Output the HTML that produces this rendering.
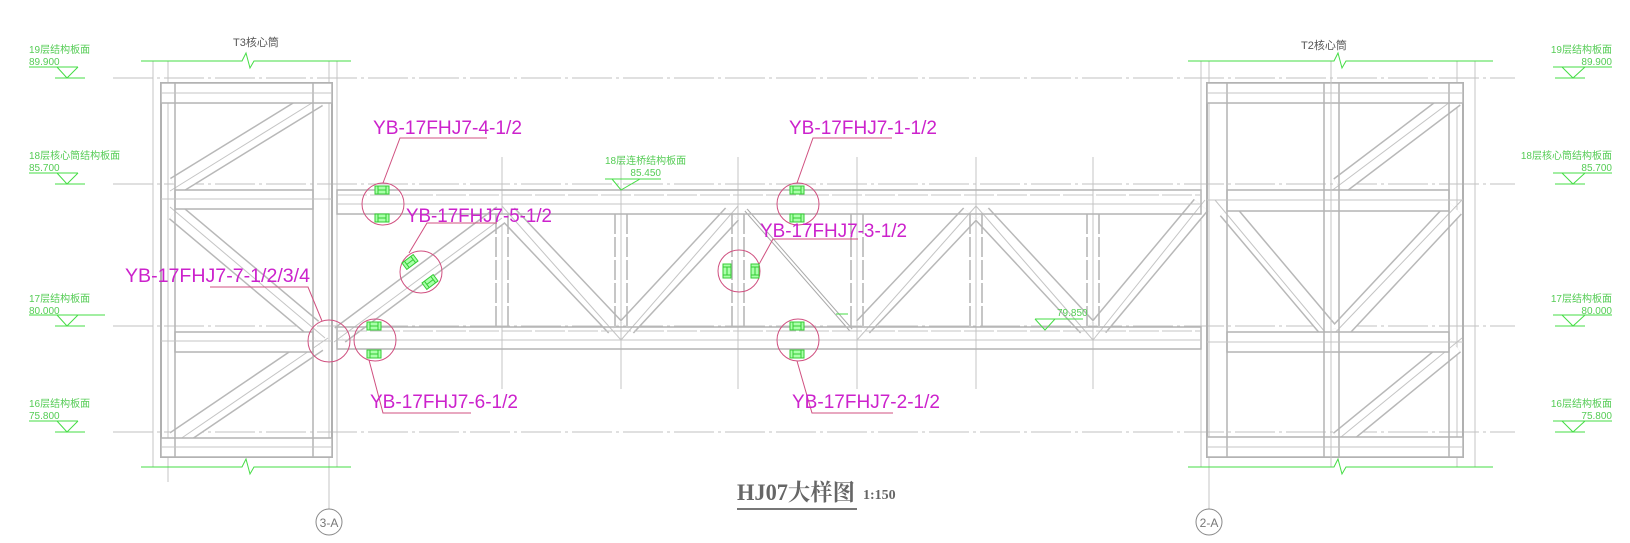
<!DOCTYPE html>
<html><head><meta charset="utf-8"><style>
html,body{margin:0;padding:0;background:#fff;width:1630px;height:543px;overflow:hidden}
svg{display:block}
.g{stroke:#b4b4b4;stroke-width:1.5;fill:none}
.gt{stroke:#c4c4c4;stroke-width:1;fill:none}
.lv{stroke:#c0c0c0;stroke-width:1;stroke-dasharray:40 4 3 4;fill:none}
.grn{stroke:#44dd44;stroke-width:1;fill:none}
.gtx{fill:#55cc55;font-family:"Liberation Sans","Noto Sans CJK SC",sans-serif;font-size:10px}
.mg{fill:#cc22cc;font-family:"Liberation Sans",sans-serif;font-size:19px}
.ml{stroke:#d05080;stroke-width:1;fill:none}
.wb{fill:#fff;stroke:#b4b4b4;stroke-width:1.5}
</style></head><body>
<svg width="1630" height="543" viewBox="0 0 1630 543" xmlns="http://www.w3.org/2000/svg">
<defs>
<g id="ib"><rect x="-7" y="-4" width="14" height="8" fill="#aaffaa" stroke="#33cc33" stroke-width="1"/><line x1="-4" y1="-4" x2="-4" y2="4" stroke="#33cc33"/><line x1="4" y1="-4" x2="4" y2="4" stroke="#33cc33"/><line x1="-4" y1="0" x2="4" y2="0" stroke="#33cc33"/></g>
</defs>

<!-- level lines -->
<line class="lv" x1="113" y1="78" x2="1515" y2="78"/>
<line class="lv" x1="113" y1="184" x2="1515" y2="184"/>
<line class="lv" x1="113" y1="326" x2="1515" y2="326"/>
<line class="lv" x1="113" y1="432" x2="1515" y2="432"/>

<!-- outer column lines -->
<line class="gt" x1="153" y1="61" x2="153" y2="467"/>
<line class="gt" x1="168" y1="61" x2="168" y2="482"/>
<line class="gt" x1="329" y1="61" x2="329" y2="509"/>
<line class="gt" x1="337" y1="61" x2="337" y2="467"/>
<line class="gt" x1="1201" y1="61" x2="1201" y2="467"/>
<line class="gt" x1="1209" y1="61" x2="1209" y2="509"/>
<line class="gt" x1="1457" y1="61" x2="1457" y2="467"/>
<line class="gt" x1="1475" y1="61" x2="1475" y2="467"/>

<!-- bridge vertical grid lines -->
<g class="gt">
<line x1="502" y1="157" x2="502" y2="389"/><line x1="621" y1="157" x2="621" y2="389"/>
<line x1="738" y1="157" x2="738" y2="389"/><line x1="857" y1="157" x2="857" y2="389"/>
<line x1="976" y1="157" x2="976" y2="389"/><line x1="1093" y1="157" x2="1093" y2="389"/>
</g>

<!-- diagonals: strip technique -->
<g stroke-linecap="butt">
<g stroke="#b8b8b8" stroke-width="19">
<line x1="175" y1="186" x2="318" y2="98"/>
<line x1="175" y1="212" x2="313" y2="328"/>
<line x1="175" y1="440" x2="318" y2="343"/>
<line x1="340" y1="335" x2="502" y2="214"/>
<line x1="508" y1="214" x2="615" y2="327"/>
<line x1="627" y1="327" x2="732" y2="214"/>
<line x1="863" y1="327" x2="970" y2="214"/>
<line x1="982" y1="214" x2="1087" y2="327"/>
<line x1="1099" y1="327" x2="1201" y2="205"/>
<line x1="1339" y1="186" x2="1455" y2="98"/>
<line x1="1227" y1="210" x2="1330" y2="332"/>
<line x1="1339" y1="332" x2="1455" y2="208"/>
<line x1="1339" y1="440" x2="1455" y2="345"/>
</g>
<g stroke="#fff" stroke-width="16">
<line x1="175" y1="186" x2="318" y2="98"/>
<line x1="175" y1="212" x2="313" y2="328"/>
<line x1="175" y1="440" x2="318" y2="343"/>
<line x1="340" y1="335" x2="502" y2="214"/>
<line x1="508" y1="214" x2="615" y2="327"/>
<line x1="627" y1="327" x2="732" y2="214"/>
<line x1="863" y1="327" x2="970" y2="214"/>
<line x1="982" y1="214" x2="1087" y2="327"/>
<line x1="1099" y1="327" x2="1201" y2="205"/>
<line x1="1339" y1="186" x2="1455" y2="98"/>
<line x1="1227" y1="210" x2="1330" y2="332"/>
<line x1="1339" y1="332" x2="1455" y2="208"/>
<line x1="1339" y1="440" x2="1455" y2="345"/>
</g>
<g class="gt">
<line x1="170" y1="191" x2="328" y2="93"/>
<line x1="170" y1="207" x2="325" y2="338"/>
<line x1="170" y1="446" x2="328" y2="338"/>
<line x1="334" y1="342" x2="502" y2="218"/>
<line x1="502" y1="206" x2="621" y2="340"/>
<line x1="621" y1="340" x2="738" y2="206"/>
<line x1="857" y1="340" x2="976" y2="206"/>
<line x1="976" y1="206" x2="1093" y2="340"/>
<line x1="1093" y1="340" x2="1205" y2="200"/>
<line x1="1330" y1="192" x2="1462" y2="93"/>
<line x1="1215" y1="200" x2="1330" y2="338"/>
<line x1="1330" y1="338" x2="1462" y2="200"/>
<line x1="1330" y1="446" x2="1462" y2="338"/>
</g>
<line x1="746" y1="210" x2="851" y2="330" stroke="#aaa" stroke-width="4"/>
<line x1="746" y1="210" x2="851" y2="330" stroke="#fff" stroke-width="2"/>
</g>

<!-- bridge chords -->
<rect x="337" y="190" width="864" height="24" fill="none" stroke="#b4b4b4" stroke-width="1.5"/>
<line class="gt" x1="337" y1="195" x2="1201" y2="195" stroke-dasharray="30 3"/>
<line class="gt" x1="337" y1="204" x2="1201" y2="204"/>
<rect x="337" y="327" width="864" height="22" fill="none" stroke="#b4b4b4" stroke-width="1.5"/>
<line class="gt" x1="337" y1="331" x2="1201" y2="331" stroke-dasharray="30 3"/>
<line class="gt" x1="337" y1="340" x2="1201" y2="340"/>
<!-- bridge posts -->
<g class="g" stroke-dasharray="20 3">
<line x1="496" y1="214" x2="496" y2="327"/><line x1="508" y1="214" x2="508" y2="327"/>
<line x1="615" y1="214" x2="615" y2="327"/><line x1="627" y1="214" x2="627" y2="327"/>
<line x1="732" y1="214" x2="732" y2="327"/><line x1="744" y1="214" x2="744" y2="327"/>
<line x1="851" y1="214" x2="851" y2="327"/><line x1="863" y1="214" x2="863" y2="327"/>
<line x1="970" y1="214" x2="970" y2="327"/><line x1="982" y1="214" x2="982" y2="327"/>
<line x1="1087" y1="214" x2="1087" y2="327"/><line x1="1099" y1="214" x2="1099" y2="327"/>
</g>

<!-- left tower frame -->
<rect x="161" y="83" width="171" height="374" fill="none" stroke="#b0b0b0" stroke-width="2"/>
<rect class="wb" x="161" y="83" width="171" height="20"/>
<rect class="wb" x="175" y="190" width="138" height="19"/>
<rect class="wb" x="175" y="332" width="138" height="20"/>
<rect class="wb" x="161" y="438" width="171" height="19"/>
<line class="g" x1="175" y1="83" x2="175" y2="457"/>
<line class="g" x1="313" y1="83" x2="313" y2="457"/>
<g class="gt"><line x1="161" y1="93" x2="332" y2="93"/><line x1="161" y1="199" x2="332" y2="199"/><line x1="161" y1="341" x2="332" y2="341"/><line x1="161" y1="447" x2="332" y2="447"/></g>

<!-- right tower frame -->
<rect x="1207" y="83" width="256" height="374" fill="none" stroke="#b0b0b0" stroke-width="2"/>
<rect class="wb" x="1207" y="83" width="256" height="20"/>
<rect class="wb" x="1227" y="190" width="222" height="21"/>
<rect class="wb" x="1227" y="332" width="222" height="20"/>
<rect class="wb" x="1207" y="437" width="256" height="20"/>
<g class="g"><line x1="1227" y1="83" x2="1227" y2="457"/><line x1="1324" y1="83" x2="1324" y2="457"/><line x1="1339" y1="83" x2="1339" y2="457"/><line x1="1449" y1="83" x2="1449" y2="457"/></g>
<g class="gt"><line x1="1207" y1="93" x2="1463" y2="93"/><line x1="1207" y1="200" x2="1463" y2="200"/><line x1="1207" y1="342" x2="1463" y2="342"/><line x1="1207" y1="447" x2="1463" y2="447"/><line x1="1331" y1="61" x2="1331" y2="467"/></g>

<!-- green break lines -->
<g class="grn">
<polyline points="141,61 242,61 246,53 250,68 254,61 351,61"/>
<polyline points="141,467 242,467 246,459 250,474 254,467 351,467"/>
<polyline points="1188,61 1334,61 1338,53 1342,68 1346,61 1493,61"/>
<polyline points="1188,467 1334,467 1338,459 1342,474 1346,467 1493,467"/>
</g>
<text x="233" y="46" font-family="Liberation Sans,'Noto Sans CJK SC',sans-serif" font-size="11" fill="#555">T3核心筒</text>
<text x="1301" y="49" font-family="Liberation Sans,'Noto Sans CJK SC',sans-serif" font-size="11" fill="#555">T2核心筒</text>

<!-- left level labels -->
<g class="grn">
<line x1="29" y1="67" x2="78" y2="67"/><polyline points="57,67 67,78 78,67"/><line x1="55" y1="78" x2="85" y2="78"/>
<line x1="29" y1="173" x2="78" y2="173"/><polyline points="57,173 67,184 78,173"/><line x1="55" y1="184" x2="85" y2="184"/>
<line x1="29" y1="315" x2="105" y2="315"/><polyline points="57,315 67,326 78,315"/><line x1="55" y1="326" x2="85" y2="326"/>
<line x1="29" y1="421" x2="78" y2="421"/><polyline points="57,421 67,432 78,421"/><line x1="55" y1="432" x2="85" y2="432"/>
</g>
<g class="gtx">
<text x="29" y="53">19层结构板面</text><text x="29" y="65">89.900</text>
<text x="29" y="159">18层核心筒结构板面</text><text x="29" y="171">85.700</text>
<text x="29" y="302">17层结构板面</text><text x="29" y="314">80.000</text>
<text x="29" y="407">16层结构板面</text><text x="29" y="419">75.800</text>
</g>
<!-- right level labels -->
<g class="grn">
<line x1="1553" y1="67" x2="1612" y2="67"/><polyline points="1562,67 1573,78 1585,67"/><line x1="1555" y1="78" x2="1585" y2="78"/>
<line x1="1553" y1="173" x2="1612" y2="173"/><polyline points="1562,173 1573,184 1585,173"/><line x1="1555" y1="184" x2="1585" y2="184"/>
<line x1="1553" y1="315" x2="1612" y2="315"/><polyline points="1562,315 1573,326 1585,315"/><line x1="1555" y1="326" x2="1585" y2="326"/>
<line x1="1553" y1="421" x2="1612" y2="421"/><polyline points="1562,421 1573,432 1585,421"/><line x1="1555" y1="432" x2="1585" y2="432"/>
</g>
<g class="gtx" text-anchor="end">
<text x="1612" y="53">19层结构板面</text><text x="1612" y="65">89.900</text>
<text x="1612" y="159">18层核心筒结构板面</text><text x="1612" y="171">85.700</text>
<text x="1612" y="302">17层结构板面</text><text x="1612" y="314">80.000</text>
<text x="1612" y="407">16层结构板面</text><text x="1612" y="419">75.800</text>
</g>
<!-- bridge levels -->
<g class="grn"><line x1="605" y1="179" x2="661" y2="179"/><polyline points="612,179 621,190 640,179"/>
<line x1="1035" y1="319" x2="1083" y2="319"/><polyline points="1035,319 1045,330 1055,319"/>
<polyline points="836,314 848,314 M836,314 L836,330"/></g>
<g class="gtx" font-size="9"><text x="605" y="164">18层连桥结构板面</text><text x="661" y="176" text-anchor="end">85.450</text><text x="1057" y="316">79.850</text></g>

<!-- callouts -->
<g class="ml">
<circle cx="383" cy="204" r="21"/><polyline points="487,138 400,138 383,183"/>
<circle cx="421" cy="272" r="21"/><polyline points="497,223 427,223 409,253"/>
<circle cx="375" cy="340" r="21"/><polyline points="369,360 383,413 471,413"/>
<circle cx="329" cy="341" r="21"/><polyline points="210,287 308,287 322,321"/>
<circle cx="798" cy="204" r="21"/><polyline points="892,138 813,138 797,183"/>
<circle cx="739" cy="271" r="21"/><polyline points="858,239 773,239 757,268"/>
<circle cx="798" cy="340" r="21"/><polyline points="797,361 812,413 893,413"/>
</g>
<g>
<use href="#ib" x="382" y="190"/><use href="#ib" x="382" y="218"/>
<use href="#ib" x="374" y="326"/><use href="#ib" x="374" y="354"/>
<use href="#ib" x="797" y="190"/><use href="#ib" x="797" y="218"/>
<use href="#ib" x="797" y="326"/><use href="#ib" x="797" y="354"/>
<use href="#ib" transform="translate(410,262) rotate(-37)"/><use href="#ib" transform="translate(430,282) rotate(-37)"/>
<use href="#ib" transform="translate(727,271) rotate(90)"/><use href="#ib" transform="translate(755,271) rotate(90)"/>
</g>
<g class="mg">
<text x="373" y="134" textLength="149" lengthAdjust="spacingAndGlyphs">YB-17FHJ7-4-1/2</text>
<text x="406" y="222" textLength="146" lengthAdjust="spacingAndGlyphs">YB-17FHJ7-5-1/2</text>
<text x="370" y="408" textLength="148" lengthAdjust="spacingAndGlyphs">YB-17FHJ7-6-1/2</text>
<text x="125" y="282" textLength="185" lengthAdjust="spacingAndGlyphs">YB-17FHJ7-7-1/2/3/4</text>
<text x="789" y="134" textLength="148" lengthAdjust="spacingAndGlyphs">YB-17FHJ7-1-1/2</text>
<text x="760" y="237" textLength="147" lengthAdjust="spacingAndGlyphs">YB-17FHJ7-3-1/2</text>
<text x="792" y="408" textLength="148" lengthAdjust="spacingAndGlyphs">YB-17FHJ7-2-1/2</text>
</g>

<!-- axis bubbles -->
<circle cx="329" cy="522" r="13" fill="none" stroke="#888" stroke-width="1"/>
<text x="329" y="527" text-anchor="middle" font-family="Liberation Sans" font-size="12" fill="#777">3-A</text>
<circle cx="1209" cy="522" r="13" fill="none" stroke="#888" stroke-width="1"/>
<text x="1209" y="527" text-anchor="middle" font-family="Liberation Sans" font-size="12" fill="#777">2-A</text>

<!-- title -->
<text x="737" y="500" font-family="Liberation Serif,'Noto Serif CJK SC',serif" font-size="23" font-weight="bold" fill="#666" textLength="118" lengthAdjust="spacingAndGlyphs">HJ07大样图</text>
<line x1="737" y1="509" x2="857" y2="509" stroke="#777" stroke-width="2"/>
<text x="863" y="499" font-family="Liberation Serif,serif" font-size="14" font-weight="bold" fill="#666">1:150</text>
</svg>
</body></html>
